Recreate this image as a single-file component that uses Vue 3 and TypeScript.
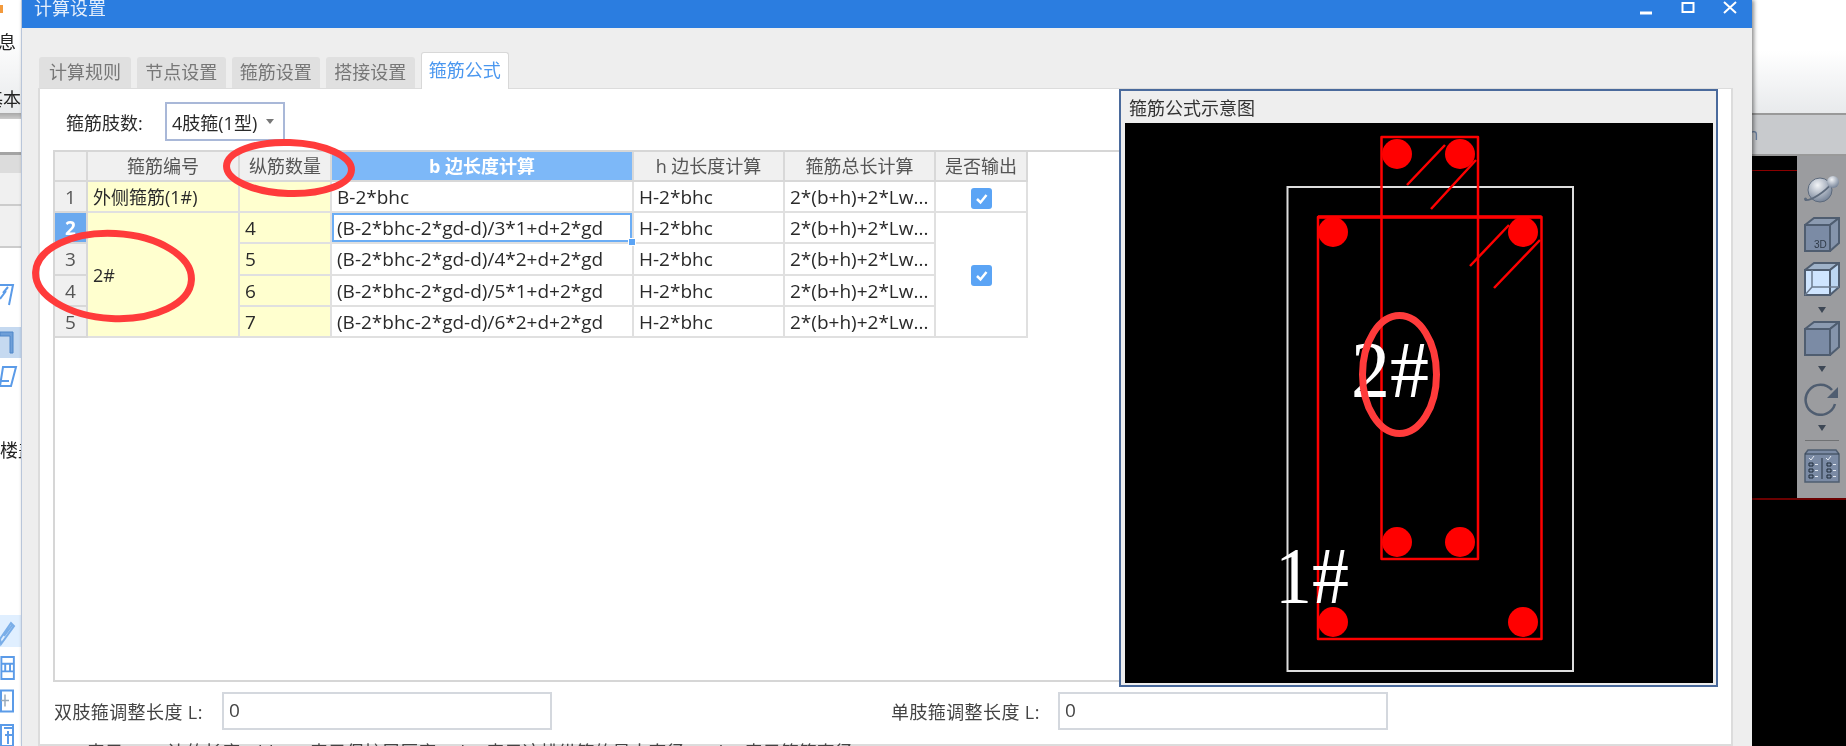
<script setup lang="ts">
interface Stirrup {
  index: number
  count: string
  b: string
  h: string
  total: string
}

const tabs = ['计算规则', '节点设置', '箍筋设置', '搭接设置', '箍筋公式']
const activeTab = '箍筋公式'

const rows: Stirrup[] = [
  { index: 1, count: '', b: 'B-2*bhc', h: 'H-2*bhc', total: '2*(b+h)+2*Lw...' },
  { index: 2, count: '4', b: '(B-2*bhc-2*gd-d)/3*1+d+2*gd', h: 'H-2*bhc', total: '2*(b+h)+2*Lw...' },
  { index: 3, count: '5', b: '(B-2*bhc-2*gd-d)/4*2+d+2*gd', h: 'H-2*bhc', total: '2*(b+h)+2*Lw...' },
  { index: 4, count: '6', b: '(B-2*bhc-2*gd-d)/5*1+d+2*gd', h: 'H-2*bhc', total: '2*(b+h)+2*Lw...' },
  { index: 5, count: '7', b: '(B-2*bhc-2*gd-d)/6*2+d+2*gd', h: 'H-2*bhc', total: '2*(b+h)+2*Lw...' },
]

const bars = [
  [1397, 154], [1460, 154], [1397, 542], [1460, 542],
  [1333, 232], [1523, 232], [1333, 622], [1523, 622],
]
</script>

<template>
  <div class="screen">
    <aside class="left-strip">
      <div class="strip-top">
        <span class="orange"></span>
        <span class="strip-info">息</span>
        <span class="strip-basic">基本</span>
      </div>
      <div class="strip-rule"></div>
      <div class="strip-white"></div>
      <div class="strip-head"></div>
      <div class="strip-row"></div>
      <div class="strip-row tall"></div>
      <div class="strip-list">
        <svg class="nav-icon first" viewBox="0 0 21 30">
          <path d="M0 4h13l-4 20M3 12l5-6M0 18l6-8" fill="none" stroke="#5b9be8" stroke-width="2" />
        </svg>
        <div class="nav-selected">
          <svg viewBox="0 0 21 31" width="21" height="31">
            <path d="M0 5h13v21h-3V9H0z" fill="#6f9fd8" stroke="#4f86c8" />
          </svg>
        </div>
        <svg class="nav-icon" viewBox="0 0 21 24">
          <path d="M3 2h13l-5 19H0zM0 16h9" fill="none" stroke="#5b9be8" stroke-width="2" />
        </svg>
        <div class="strip-floor">楼盖</div>
        <div class="nav-hover">
          <svg viewBox="0 0 21 32" width="21" height="32">
            <path d="M0 24 11 8l3 3L1 29zM4 21 13 9" fill="none" stroke="#7aaee8" stroke-width="2" />
          </svg>
        </div>
        <svg class="nav-icon small" viewBox="0 0 21 25">
          <path d="M1 1h13v23H1zM1 8h13M1 16h13M5 8v8M10 8v8" fill="none" stroke="#5b9be8" stroke-width="2" />
        </svg>
        <svg class="nav-icon small" viewBox="0 0 21 23">
          <path d="M1 1h12v21H1z" fill="none" stroke="#5b9be8" stroke-width="2" />
          <path d="M1 11h8M5 5v12" fill="none" stroke="#9ab" stroke-width="1.5" />
        </svg>
        <svg class="nav-icon small" viewBox="0 0 21 20">
          <path d="M1 1h12v21H1zM4 4h9M5 11h8M8 7v13" fill="none" stroke="#5b9be8" stroke-width="2" />
        </svg>
      </div>
    </aside>

    <section class="dialog">
      <header class="title-bar">
        <span class="title">计算设置</span>
        <div class="window-btns">
          <svg viewBox="0 0 14 14" width="14" height="14"><path d="M1 12h12" stroke="#fff" stroke-width="3" /></svg>
          <svg viewBox="0 0 14 14" width="14" height="14"><path d="M1.5 2h11v9h-11z" fill="none" stroke="#fff" stroke-width="2" /></svg>
          <svg viewBox="0 0 14 14" width="14" height="14"><path d="m1 1 12 11M13 1 1 12" stroke="#fff" stroke-width="2" /></svg>
        </div>
      </header>

      <nav class="tabs">
        <div v-for="tab in tabs" :key="tab" class="tab" :class="{ active: tab === activeTab }">{{ tab }}</div>
      </nav>

      <div class="panel">
        <div class="upper">
          <div class="form-side">
            <div class="select-row">
              <label>箍筋肢数:</label>
              <div class="select">
                <span>4肢箍(1型)</span>
                <i class="caret"></i>
              </div>
            </div>
            <div class="grid-box">
              <table class="grid">
                <colgroup>
                  <col class="c-index" />
                  <col class="c-code" />
                  <col class="c-count" />
                  <col class="c-b" />
                  <col class="c-h" />
                  <col class="c-total" />
                  <col class="c-out" />
                </colgroup>
                <thead>
                  <tr>
                    <th></th>
                    <th>箍筋编号</th>
                    <th>纵筋数量</th>
                    <th class="th-active">b 边长度计算</th>
                    <th>h 边长度计算</th>
                    <th>箍筋总长计算</th>
                    <th>是否输出</th>
                  </tr>
                </thead>
                <tbody>
                  <tr v-for="row in rows" :key="row.index">
                    <td class="idx" :class="{ 'idx-active': row.index === 2 }">{{ row.index }}</td>
                    <td v-if="row.index === 1" class="yellow code">外侧箍筋(1#)</td>
                    <td v-else-if="row.index === 2" rowspan="4" class="yellow code">2#</td>
                    <td class="yellow">{{ row.count }}</td>
                    <td :class="{ current: row.index === 2 }">
                      {{ row.b }}
                      <span v-if="row.index === 2" class="handle"></span>
                    </td>
                    <td>{{ row.h }}</td>
                    <td>{{ row.total }}</td>
                    <td v-if="row.index === 1" class="check-cell">
                      <span class="check">
                        <svg viewBox="0 0 21 21" width="21" height="21"><path d="m6 11 3.500 3.500L15.500 7" fill="none" stroke="#fff" stroke-width="2.500" /></svg>
                      </span>
                    </td>
                    <td v-else-if="row.index === 2" rowspan="4" class="check-cell">
                      <span class="check">
                        <svg viewBox="0 0 21 21" width="21" height="21"><path d="m6 11 3.500 3.500L15.500 7" fill="none" stroke="#fff" stroke-width="2.500" /></svg>
                      </span>
                    </td>
                  </tr>
                </tbody>
              </table>
            </div>
          </div>

          <div class="diagram-box">
            <div class="diagram-title">箍筋公式示意图</div>
            <svg class="diagram" viewBox="1125 123 588 560" width="588" height="560">
              <rect x="1287.500" y="187" width="285.500" height="484" fill="none" stroke="#ddd" stroke-width="2" />
              <g fill="none" stroke="#f00" stroke-width="2.500" stroke-linejoin="round">
                <rect x="1318" y="217" width="223.500" height="422" />
                <path d="M1318 217h223.500" stroke-width="3.500" />
                <rect x="1381.500" y="137" width="96.500" height="422" />
                <path d="m1445 145-38 40M1476 160l-45 49M1509 225l-39 41M1540 240l-46 48" />
              </g>
              <circle v-for="bar in bars" :key="bar.join()" :cx="bar[0]" :cy="bar[1]" r="15" fill="#f00" />
              <text class="mark" x="1351" y="397" textLength="78" lengthAdjust="spacingAndGlyphs">2#</text>
              <text class="mark" x="1275" y="603" textLength="74" lengthAdjust="spacingAndGlyphs">1#</text>
            </svg>
          </div>
        </div>

        <div class="length-row">
          <label class="len-label">双肢箍调整长度 L:</label>
          <div class="len-input">0</div>
          <label class="len-label second">单肢箍调整长度 L:</label>
          <div class="len-input">0</div>
        </div>
        <p class="note">B: 表示 B 边的长度，bhc: 表示保护层厚度，d: 表示这排纵筋的最大直径，gd: 表示箍筋直径</p>
      </div>
    </section>

    <aside class="right-side">
      <div class="app-ribbon"></div>
      <div class="app-tabs"><span>n</span></div>
      <div class="workspace">
        <div class="canvas"><div class="axis"></div></div>
        <div class="toolbar">
          <svg class="tool" viewBox="0 0 36 31" width="36" height="31">
            <defs>
              <radialGradient id="ball" cx="0.4" cy="0.3" r="0.8">
                <stop offset="0" stop-color="#f2f4f7" />
                <stop offset="1" stop-color="#66758c" />
              </radialGradient>
            </defs>
            <ellipse cx="16" cy="17" rx="12" ry="12" fill="url(#ball)" stroke="#5d6a7c" />
            <path d="M1 27c6 1 20-8 27-17" fill="none" stroke="#5d6a7c" stroke-width="2" />
            <circle cx="1.500" cy="26" r="1.500" fill="#5d6a7c" />
            <circle cx="29" cy="9" r="6" fill="url(#ball)" />
          </svg>
          <svg class="tool gap-13" viewBox="0 0 36 35" width="36" height="35">
            <path d="M1 8h25v26H1z" fill="#7b8ba5" stroke="#4f5d70" stroke-width="2" />
            <path d="m1 8 9-7h25l-9 7z" fill="#8c9bb1" stroke="#4f5d70" stroke-width="2" />
            <path d="m26 8 9-7v25l-9 8z" fill="#8594ab" stroke="#4f5d70" stroke-width="2" />
            <text class="tool-3d" x="10" y="31">3D</text>
          </svg>
          <svg class="tool gap-10" viewBox="0 0 36 34" width="36" height="34">
            <path d="M1 8h25v25H1z" fill="#cfe5ff" stroke="#4f5d70" stroke-width="2" />
            <path d="m1 8 9-7h25l-9 7z" fill="#9fb2c9" stroke="#4f5d70" stroke-width="2" />
            <path d="m26 8 9-7v24l-9 8z" fill="#bcd6f2" stroke="#4f5d70" stroke-width="2" />
            <path d="M8 8v17h27M8 25l-7 8" fill="none" stroke="#6d7c90" stroke-width="1.500" />
          </svg>
          <i class="drop gap-11"></i>
          <svg class="tool gap-8" viewBox="0 0 36 35" width="36" height="35">
            <path d="M1 8h25v26H1z" fill="#7b8ba5" stroke="#4f5d70" stroke-width="2" />
            <path d="m1 8 9-7h25l-9 7z" fill="#8c9bb1" stroke="#4f5d70" stroke-width="2" />
            <path d="m26 8 9-7v25l-9 8z" fill="#8594ab" stroke="#4f5d70" stroke-width="2" />
          </svg>
          <i class="drop gap-10"></i>
          <svg class="tool gap-10" viewBox="0 0 36 34" width="36" height="34">
            <path d="M28 8A15 15 0 1 0 31 22" fill="none" stroke="#4f5d70" stroke-width="2.500" />
            <path d="M34 5v11H23z" fill="#4f5d70" />
          </svg>
          <i class="drop gap-9"></i>
          <div class="tool-sep"></div>
          <svg class="tool gap-8" viewBox="0 0 36 34" width="36" height="34">
            <path d="M1 5 4 1h28l3 4v28H1z" fill="#7b8ba5" stroke="#4f5d70" stroke-width="1.500" />
            <path d="M1 5h34M18 9v21" stroke="#33404f" stroke-width="1.200" />
            <path d="m5 9 2 2 3-4M22 9l2 2 3-4" fill="none" stroke="#e2e8f0" />
            <path d="M5 14h4v3H5zM5 20h4v3H5zM5 26h4v3H5zM23 14h4v3h-4zM23 20h4v3h-4zM23 26h4v3h-4z" fill="none" stroke="#1f2a38" />
            <path d="M11 15.500h3M11 21.500h3M11 27.500h3M29 15.500h3M29 21.500h3M29 27.500h3" stroke="#e2e8f0" />
          </svg>
        </div>
      </div>
      <div class="red-rule"></div>
    </aside>

    <svg class="annotations" viewBox="0 0 1846 746" width="1846" height="746">
      <g fill="none" stroke="#ff3b3b" stroke-width="7">
        <ellipse cx="289" cy="168" rx="62.500" ry="25.500" transform="rotate(2 289 168)" />
        <ellipse cx="113.500" cy="276" rx="78" ry="42.500" transform="rotate(3 113.500 276)" />
        <ellipse cx="1399.500" cy="374.500" rx="37" ry="59" />
      </g>
    </svg>
  </div>
</template>

<style scoped>
.screen {
  position: relative;
  display: flex;
  width: 1846px;
  height: 746px;
  overflow: hidden;
  background: #fff;
  font-family: "Open Sans", "Noto Sans CJK SC", sans-serif;
  font-size: 18px;
  color: #2a2a2a;
  filter: blur(0.45px);
}

/* main window behind the dialog, left edge */
.left-strip {
  flex: 0 0 21px;
  display: flex;
  flex-direction: column;
  overflow: hidden;
  background: #fff;
}

.strip-top {
  position: relative;
  height: 113px;
  flex: none;
  display: flex;
  flex-direction: column;
  align-items: flex-end;
  background: linear-gradient(#fff 30%, #e8eaec);
  font-size: 18px;
  color: #222;
}

.orange {
  position: absolute;
  left: 0;
  top: 5px;
  width: 3px;
  height: 8px;
  background: #f39a3c;
}

.strip-info {
  margin: 30px 5px 0 0;
  line-height: 24px;
}

.strip-basic {
  margin-top: 33px;
  line-height: 24px;
  white-space: nowrap;
}

.strip-rule {
  height: 6px;
  flex: none;
  background: linear-gradient(#a8a8a8, #ccc);
}

.strip-white {
  height: 33px;
  flex: none;
}

.strip-head {
  height: 21px;
  flex: none;
  border-top: 3px solid #a4a4a4;
  background: #dcdcdc;
  box-sizing: border-box;
}

.strip-row {
  height: 33px;
  flex: none;
  background: #f0f0f0;
  border-bottom: 2px solid #ccc;
  box-sizing: border-box;
}

.strip-row.tall {
  height: 42px;
}

.strip-list {
  display: flex;
  flex-direction: column;
}

.nav-icon {
  display: block;
  width: 21px;
  height: 24px;
  flex: none;
}

.nav-icon.first {
  height: 30px;
  margin: 33px 0 16px;
}

.nav-selected {
  height: 31px;
  flex: none;
  background: #c5d9f0;
}

.nav-selected + .nav-icon {
  margin-top: 7px;
}

.strip-floor {
  margin-top: 49px;
  height: 24px;
  line-height: 24px;
  font-size: 18px;
  white-space: nowrap;
  color: #222;
}

.nav-hover {
  margin-top: 153px;
  height: 32px;
  flex: none;
  background: #e0efff;
}

.nav-icon.small {
  height: 24px;
  margin-top: 9px;
}

/* dialog */
.dialog {
  position: relative;
  z-index: 1;
  flex: 0 0 1731px;
  box-sizing: border-box;
  display: flex;
  flex-direction: column;
  background: #eee;
  border-left: 1px solid #b9c6da;
  box-shadow: 2px 0 4px rgba(0, 0, 0, 0.45);
}

.title-bar {
  height: 28px;
  flex: none;
  display: flex;
  justify-content: space-between;
  background: #2b7de0;
  color: #e4eefb;
  overflow: hidden;
}

.title {
  margin: -4px 0 0 12px;
  font-size: 18px;
  line-height: 24px;
}

.window-btns {
  display: flex;
  align-items: flex-start;
  gap: 28px;
  padding: 1px 15px 0 0;
}

.tabs {
  height: 60px;
  flex: none;
  box-sizing: border-box;
  display: flex;
  align-items: flex-end;
  gap: 6px;
  padding-left: 17px;
}

.tab {
  position: relative;
  width: 88.500px;
  height: 31px;
  line-height: 30px;
  text-align: center;
  font-size: 18px;
  color: #777;
  background: #e0e0e0;
  border-radius: 3px 3px 0 0;
}

.tab:first-child {
  width: 92px;
}

.tab.active {
  height: 37px;
  z-index: 1;
  margin-bottom: -1px;
  box-sizing: border-box;
  line-height: 34px;
  color: #4a97ef;
  background: #fff;
  border: 1px solid #d8d8d8;
  border-bottom: none;
}

.panel {
  margin-left: 16px;
  width: 1695px;
  flex: 1;
  min-height: 0;
  box-sizing: border-box;
  background: #fff;
  border: 2px solid #dcdcdc;
  border-top-width: 1px;
}

.upper {
  display: flex;
  height: 598px;
}

.form-side {
  width: 1079px;
  flex: none;
  box-sizing: border-box;
  padding-left: 13px;
}

.select-row {
  display: flex;
  align-items: center;
  height: 39px;
  margin: 13px 0 9px;
  padding-left: 13px;
}

.select-row label {
  width: 99px;
}

.select {
  width: 120px;
  height: 39px;
  box-sizing: border-box;
  display: flex;
  align-items: center;
  justify-content: space-between;
  padding: 0 9px 0 5px;
  border: 2px solid #a9b8d8;
}

.caret {
  width: 0;
  height: 0;
  border: 4px solid transparent;
  border-top: 5px solid #777;
  border-bottom: none;
}

.grid-box {
  height: 532px;
  box-sizing: border-box;
  border: 2px solid #d6d6d6;
  border-right: none;
}

.grid {
  table-layout: fixed;
  border-collapse: separate;
  border-spacing: 0;
  width: 973px;
}

.c-index { width: 33px; }
.c-code { width: 152px; }
.c-count { width: 92px; }
.c-b { width: 302px; }
.c-h { width: 151px; }
.c-total { width: 151px; }
.c-out { width: 92px; }

.grid th,
.grid td {
  box-sizing: border-box;
  padding: 0 0 0 5px;
  border-right: 2px solid #e0e0e0;
  border-bottom: 2px solid #e0e0e0;
  white-space: nowrap;
  overflow: hidden;
  font-size: 19px;
  font-weight: 400;
}

.grid th {
  height: 30px;
  padding: 0;
  line-height: 28px;
  background: #f0f0f0;
  color: #555;
  font-size: 18px;
  text-align: center;
  border-color: #d8d8d8;
}

.grid td {
  height: 31.200px;
  padding-top: 2px;
  line-height: 27px;
}

.grid th.th-active {
  background: #7db8f8;
  color: #fff;
  font-weight: 700;
}

.grid td.idx {
  padding: 2px 0 0;
  text-align: center;
  background: #f0f0f0;
  color: #555;
  border-color: #d8d8d8;
}

.grid td.idx-active {
  background: #6aa9ef;
  color: #fff;
  font-weight: 700;
}

.grid td.yellow {
  background: #ffffcf;
}

.grid td.code {
  font-size: 18px;
}

.grid td.current {
  position: relative;
  overflow: visible;
  box-shadow: inset 0 0 0 2px #6badf5;
}

.handle {
  position: absolute;
  right: -4px;
  bottom: -4px;
  width: 6px;
  height: 6px;
  background: #5ba4f5;
  border: 1px solid #fff;
}

.grid td.check-cell {
  padding: 0;
  text-align: center;
  vertical-align: middle;
}

.check {
  display: inline-block;
  width: 21px;
  height: 21px;
  vertical-align: middle;
  border-radius: 3px;
  background: #5ba4f5;
}

.check svg {
  display: block;
}

/* formula preview */
.diagram-box {
  width: 599px;
  flex: none;
  height: 598px;
  box-sizing: border-box;
  display: flex;
  flex-direction: column;
  padding: 0 3px 2px 4px;
  background: #eee;
  border: 2px solid #4a6a9c;
}

.diagram-title {
  height: 32px;
  flex: none;
  line-height: 34px;
  padding-left: 4px;
  color: #333;
}

.diagram {
  display: block;
  flex: none;
  background: #000;
}

.mark {
  font-family: "Liberation Serif", serif;
  font-size: 80px;
  fill: #fff;
}

.length-row {
  display: flex;
  align-items: center;
  height: 38px;
  margin-top: 5px;
  padding-left: 14px;
  color: #444;
}

.len-label {
  width: 168px;
  white-space: nowrap;
  letter-spacing: 0.4px;
}

.len-label.second {
  margin-left: 339px;
  width: 167px;
}

.len-input {
  width: 330px;
  height: 38px;
  box-sizing: border-box;
  padding-left: 5px;
  font-size: 19px;
  line-height: 33px;
  border: 2px solid #d4d8de;
  color: #444;
}

.note {
  margin: 10px 0 0 14px;
  line-height: 24px;
  white-space: nowrap;
  word-spacing: 12px;
  color: #444;
}

/* main window behind the dialog, right edge */
.right-side {
  flex: 1;
  min-width: 0;
  display: flex;
  flex-direction: column;
  background: #000;
  overflow: hidden;
}

.app-ribbon {
  height: 113px;
  flex: none;
  background: linear-gradient(#fff 45%, #e8eaec);
}

.app-tabs {
  height: 43px;
  flex: none;
  box-sizing: border-box;
  background: #c8cacd;
  border-top: 2px solid #999;
  border-bottom: 2px solid #999;
  line-height: 38px;
  font-size: 17px;
  color: #6a7fa0;
}

.app-tabs span {
  margin-left: -4px;
}

.workspace {
  display: flex;
  height: 342px;
  flex: none;
}

.canvas {
  width: 45px;
  flex: none;
}

.axis {
  margin-top: 14px;
  height: 1px;
  background: #8b0000;
}

.toolbar {
  flex: 1;
  display: flex;
  flex-direction: column;
  align-items: center;
  padding-top: 17px;
  background: #9b9c9f;
}

.tool {
  display: block;
  flex: none;
}

.tool-3d {
  font-family: "Liberation Sans", sans-serif;
  font-size: 10px;
  fill: #2f3a48;
}

.drop {
  width: 0;
  height: 0;
  flex: none;
  border: 4px solid transparent;
  border-top: 6px solid #3d4755;
  border-bottom: none;
}

.tool-sep {
  width: 34px;
  height: 1px;
  flex: none;
  margin-top: 9px;
  background: #707274;
}

.gap-8 { margin-top: 8px; }
.gap-9 { margin-top: 9px; }
.gap-10 { margin-top: 10px; }
.gap-11 { margin-top: 11px; }
.gap-13 { margin-top: 13px; }

.red-rule {
  height: 2px;
  flex: none;
  background: #6a0000;
}

.annotations {
  position: absolute;
  left: 0;
  top: 0;
  z-index: 5;
  pointer-events: none;
}
</style>
